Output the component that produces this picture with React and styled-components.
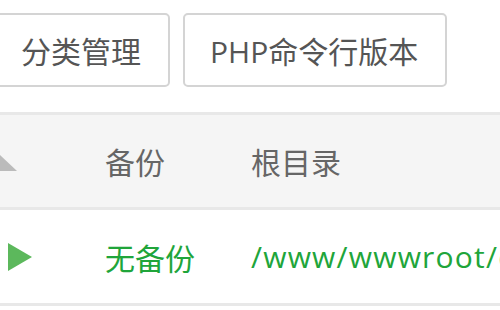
import React from "react";
import styled, { createGlobalStyle } from "styled-components";

const Global = createGlobalStyle`
  html, body { margin: 0; padding: 0; background: #fff; overflow: hidden; }
  body { font-family: "Open Sans", "Noto Sans CJK SC", sans-serif; }
`;

const Page = styled.div`
  width: 500px;
  height: 310px;
  overflow: hidden;
  background: #fff;
`;

const Toolbar = styled.div`
  display: flex;
  gap: 13px;
  margin-left: -6px;
  padding-top: 13px;
  height: 74px;
  margin-bottom: 25px;
`;

const Button = styled.div`
  box-sizing: border-box;
  height: 74px;
  padding: 0 27px 0 25px;
  border: 2px solid #d4d4d4;
  border-radius: 5px;
  display: flex;
  align-items: center;
  font-size: 30px;
  color: #555;
  white-space: nowrap;
  background: #fff;
`;

const Table = styled.div`
  border-top: 3px solid #e8e8e8;
  width: 620px;
`;

const Row = styled.div`
  display: grid;
  grid-template-columns: 105px 146px 1fr;
  align-items: center;
  height: ${(p) => p.$h}px;
  background: ${(p) => (p.$head ? "#f5f5f5" : "#fff")};
  border-bottom: 3px solid #e8e8e8;
  box-sizing: content-box;
`;

const Cell = styled.div`
  font-size: 30px;
  color: ${(p) => (p.$green ? "#20a53a" : "#666")};
  letter-spacing: ${(p) => (p.$path ? "1.2px" : "0")};
  white-space: nowrap;
  display: flex;
  align-items: center;
`;

const IconCell = styled.div`
  display: flex;
  align-items: center;
  height: 100%;
`;

const SortIcon = () => (
  <svg width="18" height="17" viewBox="0 0 18 17" style={{ display: "block", marginTop: "4px" }}>
    <polygon points="0,0 17,16 0,16" fill="#bbbbbb" />
  </svg>
);

const PlayIcon = () => (
  <svg width="26" height="28" viewBox="0 0 26 28" style={{ display: "block", marginLeft: "8px" }}>
    <polygon points="0,0 24,14 0,28" fill="#5cb85c" />
  </svg>
);

export default function App() {
  return (
    <Page>
      <Global />
      <Toolbar>
        <Button>分类管理</Button>
        <Button>PHP命令行版本</Button>
      </Toolbar>
      <Table>
        <Row $head $h={92}>
          <IconCell><SortIcon /></IconCell>
          <Cell>备份</Cell>
          <Cell>根目录</Cell>
        </Row>
        <Row $h={93}>
          <IconCell><PlayIcon /></IconCell>
          <Cell $green>无备份</Cell>
          <Cell $green $path>/www/wwwroot/default</Cell>
        </Row>
      </Table>
    </Page>
  );
}
